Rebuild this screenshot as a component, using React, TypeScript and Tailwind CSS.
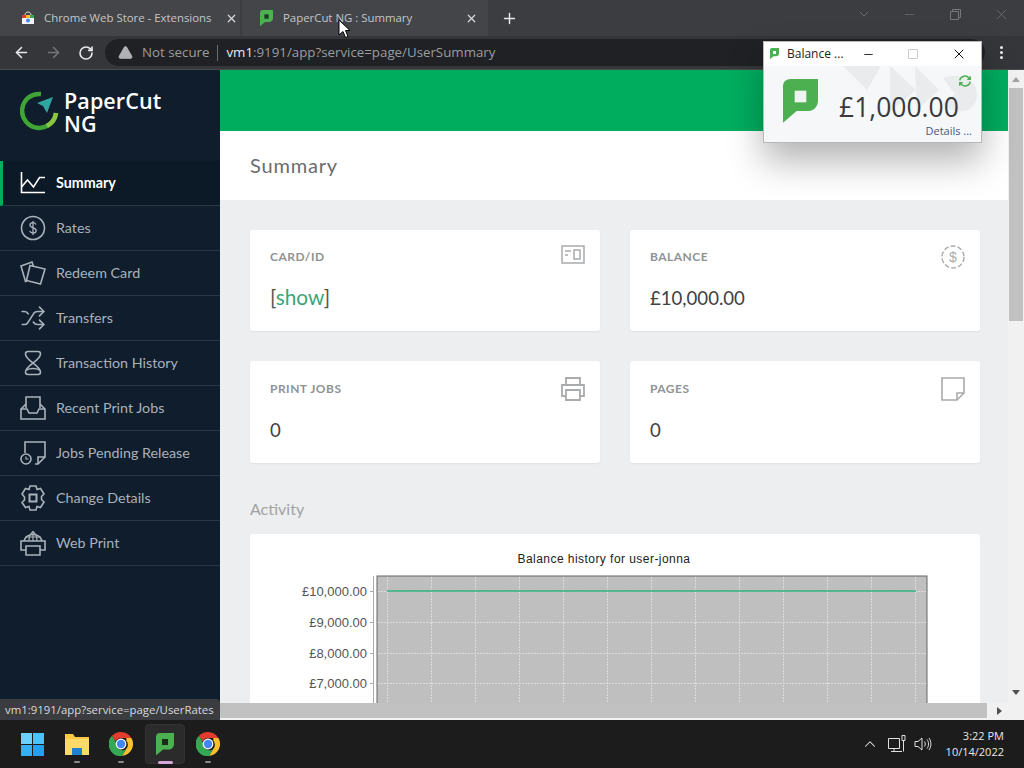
import { ArrowLeft, ArrowRight, ChevronDown, ChevronUp, Minus, Plus, RotateCw, Shuffle, TriangleAlert, X } from 'lucide-react';
import type { ReactNode } from 'react';

function NavIcon({ children }: { children: ReactNode }) {
  return (
    <svg width="26" height="26" viewBox="0 0 26 26" fill="none" stroke="currentColor" strokeWidth="1.6" className="shrink-0">
      {children}
    </svg>
  );
}

const NAV_ITEMS: { label: string; icon: ReactNode }[] = [
  {
    label: 'Summary',
    icon: (
      <NavIcon>
        <path d="M1.500 2v20.500H25" />
        <path d="M1.500 17l6-7 6 7 6-9.500h5.500" />
      </NavIcon>
    ),
  },
  {
    label: 'Rates',
    icon: (
      <NavIcon>
        <circle cx="13" cy="13" r="11.500" />
        <path d="M16 9.500c-.6-1.200-1.700-1.800-3-1.800-1.700 0-3 .9-3 2.500 0 3.300 6.200 1.800 6.200 5.200 0 1.600-1.400 2.600-3.200 2.600-1.500 0-2.700-.7-3.300-2M13 6v14" strokeWidth="1.300" />
      </NavIcon>
    ),
  },
  {
    label: 'Redeem Card',
    icon: (
      <NavIcon>
        <path d="M7 21l-1.500.5L1 6l11-4 1.500 4.500" />
        <path d="M10 5.500l15 3.500-4.500 15-14-3.500z" />
      </NavIcon>
    ),
  },
  {
    label: 'Transfers',
    icon: <Shuffle size={26} strokeWidth={1.5} className="shrink-0" />,
  },
  {
    label: 'Transaction History',
    icon: (
      <NavIcon>
        <path d="M8 1.500h10c1.500 0 2.500 1 2.500 2.500 0 3.500-3.500 6-7.500 9-4-3-7.500-5.500-7.500-9 0-1.500 1-2.500 2.500-2.500z" />
        <path d="M13 13c4 3 7.500 5.500 7.500 9 0 1.500-1 2.500-2.500 2.500H8c-1.500 0-2.500-1-2.500-2.500 0-3.500 3.500-6 7.500-9z" />
        <path d="M6.500 20c3-2 10-2 13 0" />
      </NavIcon>
    ),
  },
  {
    label: 'Recent Print Jobs',
    icon: (
      <NavIcon>
        <path d="M6 13V2h14v11" />
        <path d="M6 9l-5 5v10h24V14l-5-5" />
        <path d="M1 14h6l2 4h8l2-4h6" />
      </NavIcon>
    ),
  },
  {
    label: 'Jobs Pending Release',
    icon: (
      <NavIcon>
        <path d="M5 13V2h20v15l-7 7h-3" />
        <path d="M25 17h-7v7" />
        <circle cx="6" cy="19" r="5" />
        <path d="M6 16.500V19h2.500" strokeWidth="1.200" />
      </NavIcon>
    ),
  },
  {
    label: 'Change Details',
    icon: (
      <NavIcon>
        <path d="M10 1h6l1 3.500 3.500-1 3.500 5.500-2.500 2.500v3l2.500 2.500-3.500 5.500-3.500-1-1 3.500h-6l-1-3.500-3.500 1L2 17.500 4.500 15v-3L2 9l3.500-5.500 3.500 1z" />
        <rect x="9.500" y="9.500" width="7" height="7" strokeWidth="2" />
      </NavIcon>
    ),
  },
  {
    label: 'Web Print',
    icon: (
      <NavIcon>
        <path d="M4 11a9.500 9.500 0 0 1 18 0" />
        <path d="M13 1.500V11M9 11c0-4 1.500-7.500 4-9.500 2.500 2 4 5.500 4 9.500M5 7h16" strokeWidth="1.200" />
        <path d="M6 20H1v-9h24v9h-5" />
        <path d="M6 16h14v9H6z" />
      </NavIcon>
    ),
  },
];

function PaperCutLeaf({ size, inner = '#ffffff' }: { size: number; inner?: string }) {
  return (
    <svg width={size} height={size * 1.25} viewBox="0 0 36 45" className="shrink-0">
      <path d="M8 0h28v22c0 7-5 11-11 11H14L0 45V8c0-5 3-8 8-8z" fill="#4caf50" />
      <rect x="12" y="12" width="12" height="12" fill={inner} />
    </svg>
  );
}

function ChromeLogo() {
  return (
    <svg width="24" height="24" viewBox="0 0 24 24" className="shrink-0">
      <path d="M12 0a12 12 0 0 1 10.400 6H12a6 6 0 0 0-5.500 3.500L3 3.800A12 12 0 0 1 12 0z" fill="#e33b2e" />
      <path d="M22.400 6A12 12 0 0 1 13 24l4.200-7A6 6 0 0 0 17.500 9l-.2-3z" fill="#fbc02d" />
      <path d="M3 3.800l4.500 8A6 6 0 0 0 17.200 17L13 24A12 12 0 0 1 3 3.800z" fill="#35a853" />
      <circle cx="12" cy="12" r="5.400" fill="#fff" />
      <circle cx="12" cy="12" r="4.200" fill="#4285f4" />
    </svg>
  );
}

function StatCard({ label, icon, lower, children }: { label: string; icon: ReactNode; lower?: boolean; children: ReactNode }) {
  return (
    <div className={`bg-white rounded-[3px] shadow-[0_1px_2px_rgba(0,0,0,0.06)] px-5 flex justify-between ${lower ? 'pt-[21px]' : 'pt-[20px]'}`}>
      <div>
        <div className="text-[12px] leading-[14px] font-bold tracking-[0.04em] text-[#909294] h-[14px]">{label}</div>
        <div className="text-[18.6px] leading-[28px] mt-[20px] text-[#3f4144]">{children}</div>
      </div>
      <div className="text-[#a9abad] mt-[-5px] mr-[-5px]">{icon}</div>
    </div>
  );
}

const GRID_X = [387, 431, 475, 519, 563, 607, 651, 695, 739, 783, 827, 871, 915];
const GRID_Y = [591, 622, 653, 683];
const Y_LABELS = ['£10,000.00', '£9,000.00', '£8,000.00', '£7,000.00'];

function BalanceChart() {
  return (
    <svg width="730" height="200" viewBox="250 534 730 200" className="block">
      <text x="604" y="563" textAnchor="middle" fontFamily="Liberation Sans, sans-serif" fontSize="12" letterSpacing="0.45" fill="#222">
        Balance history for user-jonna
      </text>
      <rect x="377" y="576" width="550" height="160" fill="#bfbfbf" stroke="#666" />
      <path d="M373.500 576v160" stroke="#aaa" />
      {GRID_X.map((x) => (
        <path key={x} d={`M${x + 0.5} 577v159`} stroke="#dcdcdc" strokeDasharray="2 1" />
      ))}
      {GRID_Y.map((y, i) => (
        <g key={y}>
          <path d={`M378 ${y + 0.5}h548`} stroke="#dcdcdc" strokeDasharray="2 1" />
          <path d={`M370 ${y + 0.5}h4`} stroke="#aaa" />
          <text x="367" y={y + 5} textAnchor="end" fontFamily="Liberation Sans, sans-serif" fontSize="13" fill="#555">
            {Y_LABELS[i]}
          </text>
        </g>
      ))}
      <path d="M387 591h529" stroke="#2bb07e" strokeWidth="1.500" />
    </svg>
  );
}

function RunningDot() {
  return <div className="absolute bottom-[-7px] left-[9px] w-[6px] h-[2px] rounded-full bg-[#8a8a8a]" />;
}

export default function App() {
  return (
    <div className="relative w-[1024px] h-[768px] overflow-hidden flex flex-col font-['Lato',sans-serif] bg-[#eceef0]">
      {/* chrome tabs */}
      <div className="h-9 shrink-0 bg-[#3b3d40] flex items-stretch font-['Open_Sans',sans-serif] text-[11.4px] text-[#c4c6c8]">
        <div className="w-[240px] bg-[#434548] flex items-center pl-[21px] pr-[2px]">
          <svg width="14" height="14" viewBox="0 0 14 14" className="shrink-0">
            <path d="M1 4h12v9H1z" fill="#f4f4f4" />
            <path d="M1 4h4v3H1z" fill="#e33b2e" />
            <path d="M5 4h4v3H5z" fill="#fbc02d" />
            <path d="M9 4h4v3H9z" fill="#35a853" />
            <circle cx="7" cy="9.500" r="2" fill="#4285f4" />
            <path d="M4 4c0-4 6-4 6 0" fill="none" stroke="#ddd" />
          </svg>
          <span className="ml-[9px] flex-1 whitespace-nowrap">Chrome Web Store - Extensions</span>
          <X size={13} strokeWidth={2.2} className="text-[#dadce0]" />
        </div>
        <div className="w-[246px] bg-[#434548] flex items-center pl-[18px] pr-[10px] ml-[2px]">
          <PaperCutLeaf size={13} inner="#1c3c20" />
          <span className="ml-[10px] flex-1 whitespace-nowrap">PaperCut NG : Summary</span>
          <X size={13} strokeWidth={2.2} className="text-[#dadce0]" />
        </div>
        <div className="flex items-center ml-[13px]">
          <Plus size={17} strokeWidth={2} className="text-[#e8eaed]" />
        </div>
        <div className="flex-1 flex items-center justify-end text-[#75787b] pr-[14px] pb-[8px]">
          <ChevronDown size={16} strokeWidth={1.2} />
          <Minus size={15} strokeWidth={1} className="ml-[30px]" />
          <svg width="11" height="11" viewBox="0 0 11 11" fill="none" stroke="currentColor" className="ml-[33px]">
            <path d="M.5 2.500h8v8h-8zM2.500 2.500v-2h8v8h-2" />
          </svg>
          <X size={17} strokeWidth={1} className="ml-[32px]" />
        </div>
      </div>

      {/* chrome toolbar */}
      <div className="h-[34px] shrink-0 bg-[#35363a] flex items-center pl-[13px] pr-[18px] border-b border-[#4a4b4e]">
        <ArrowLeft size={17} strokeWidth={2.2} className="text-[#e8eaed]" />
        <ArrowRight size={17} strokeWidth={2.2} className="text-[#737578] ml-[15px]" />
        <RotateCw size={16} strokeWidth={2.4} className="text-[#e8eaed] ml-[16px]" />
        <div className="ml-[11px] h-[27px] w-[880px] rounded-full bg-[#202124] flex items-center pl-[13px] font-['Open_Sans',sans-serif] text-[13.3px] text-[#9a9da0]">
          <TriangleAlert size={15} fill="#b0b2b5" stroke="#b0b2b5" className="shrink-0" />
          <span className="ml-[9px] whitespace-nowrap">Not secure</span>
          <span className="w-px h-[16px] bg-[#6a6c6f] mx-[8px]" />
          <span className="whitespace-nowrap">
            <span className="text-[#e8eaed]">vm1</span>:9191/app?service=page/UserSummary
          </span>
        </div>
      </div>

      <div className="h-[650px] shrink-0 flex">
        {/* sidebar */}
        <aside className="w-[220px] shrink-0 bg-[#0f1d2d] text-[#a9b2ba]">
          <div className="h-[91px] flex items-start pl-[20px] pt-[20px]">
            <svg width="40" height="42" viewBox="0 0 40 42" className="shrink-0">
              <path d="M21 4A17 17 0 1 0 36 23" fill="none" stroke="#3fa535" strokeWidth="4.500" />
              <path d="M36 23a17 17 0 0 1-9 13" fill="none" stroke="#8cc63f" strokeWidth="4.500" />
              <path d="M33 7L17 13l6 3 4 7z" fill="#2fa7a0" />
            </svg>
            <div className="ml-[4px] text-white text-[21.5px] leading-[23px] font-['Open_Sans',sans-serif] font-semibold tracking-[0.1px] mt-[-1px]">
              PaperCut
              <br />
              NG
            </div>
          </div>
          {NAV_ITEMS.map((item, index) => (
            <div
              key={item.label}
              className={`h-[45px] flex items-center border-b border-[#2a3846] ${
                index === 0 ? 'bg-[#0c1926] text-white font-bold border-l-[3px] border-l-[#00ad5f] pl-[17px]' : 'pl-[20px]'
              }`}
            >
              {item.icon}
              <span className="ml-[10px] text-[14.3px] whitespace-nowrap">{item.label}</span>
            </div>
          ))}
        </aside>

        <div className="flex-1 min-w-0 flex flex-col">
          <div className="h-[633px] flex">
            {/* page content */}
            <main className="w-[788px] overflow-hidden">
              <div className="h-[61px] bg-[#00ad5f]" />
              <div className="h-[69px] bg-white flex items-center pl-[30px] pb-[2px] text-[20px] tracking-[0.04em] text-[#6a6c6e]">Summary</div>
              <div className="pt-[30px] pl-[30px]">
                <div className="w-[730px] grid grid-cols-2 grid-rows-[101px_102px] gap-[30px]">
                  <StatCard
                    label="CARD/ID"
                    icon={
                      <svg width="24" height="20" viewBox="0 0 24 20" fill="none" stroke="currentColor" strokeWidth="1.500">
                        <path d="M1 1h22v17H1zM4 6h6M4 10h3M13 5h6v9h-6z" />
                      </svg>
                    }
                  >
                    <span className="text-[20.8px] leading-[20px]">
                      <span className="text-[#555]">[</span>
                      <span className="text-[#3aa578]">show</span>
                      <span className="text-[#555]">]</span>
                    </span>
                  </StatCard>
                  <StatCard
                    label="BALANCE"
                    icon={
                      <svg width="24" height="24" viewBox="0 0 24 24" fill="none" stroke="currentColor" strokeWidth="1.400">
                        <circle cx="12" cy="12" r="11" strokeDasharray="5 2" />
                        <text x="12" y="17" textAnchor="middle" fontSize="14" fontFamily="Liberation Sans, sans-serif" fill="currentColor" stroke="none">$</text>
                      </svg>
                    }
                  >
                    £10,000.00
                  </StatCard>
                  <StatCard
                    lower
                    label="PRINT JOBS"
                    icon={
                      <svg width="24" height="24" viewBox="0 0 24 24" fill="none" stroke="currentColor" strokeWidth="1.800">
                        <path d="M5 8V1h14v7M5 19H1V8h22v11h-4M5 13h14v10H5z" />
                      </svg>
                    }
                  >
                    0
                  </StatCard>
                  <StatCard
                    lower
                    label="PAGES"
                    icon={
                      <svg width="24" height="24" viewBox="0 0 24 24" fill="none" stroke="currentColor" strokeWidth="1.600">
                        <path d="M1 1h22v15l-7 7H1zM23 16h-7v7" />
                      </svg>
                    }
                  >
                    0
                  </StatCard>
                </div>
                <div className="mt-[36px] text-[16px] leading-[20px] text-[#a1a3a5]">Activity</div>
                <div className="mt-[15px] w-[730px] bg-white rounded-[3px]">
                  <BalanceChart />
                </div>
              </div>
            </main>
            {/* vertical scrollbar */}
            <div className="w-4 bg-[#f1f1f1] flex flex-col items-center">
              <div className="h-[18px] flex items-center justify-center">
                <div className="w-0 h-0 border-x-[4px] border-x-transparent border-b-[5px] border-b-[#a3a3a3]" />
              </div>
              <div className="w-[14px] h-[233px] bg-[#c1c1c1]" />
              <div className="flex-1" />
              <div className="h-[15px] flex items-center justify-center mb-[3px]">
                <div className="w-0 h-0 border-x-[4px] border-x-transparent border-t-[5px] border-t-[#505050]" />
              </div>
            </div>
          </div>
          {/* horizontal scrollbar */}
          <div className="h-[17px] flex bg-[#f1f1f1]">
            <div className="w-[767px] h-[15px] bg-[#c1c1c1]" />
            <div className="w-[21px] h-[15px] flex items-center justify-end pr-[6px]">
              <div className="w-0 h-0 border-y-[4px] border-y-transparent border-l-[5px] border-l-[#505050]" />
            </div>
          </div>
        </div>
      </div>

      {/* windows taskbar */}
      <div className="h-12 shrink-0 bg-[#1c1c1c] flex items-center text-white">
        <div className="ml-[21px] grid grid-cols-2 gap-[1px] w-[23px] h-[23px]">
          <div className="bg-[#6ad2fb]" />
          <div className="bg-[#4cc2f8]" />
          <div className="bg-[#34b0f3]" />
          <div className="bg-[#259ff0]" />
        </div>
        <div className="ml-[21px] relative w-[24px] h-[24px]">
          <svg width="24" height="24" viewBox="0 0 24 24">
            <path d="M0 2h8l2 3h14v18H0z" fill="#f7c945" />
            <path d="M0 7h24v16H0z" fill="#fbd96b" />
            <path d="M7 16h10v7H7z" fill="#1f7fd0" />
          </svg>
          <RunningDot />
        </div>
        <div className="ml-[20px] relative">
          <ChromeLogo />
          <RunningDot />
        </div>
        <div className="ml-[12px] w-10 h-10 rounded-[4px] bg-[#2b2b2b] border border-[#333] flex items-center justify-center relative">
          <PaperCutLeaf size={18} inner="#1c2a1c" />
          <div className="absolute bottom-[-1px] left-[12px] w-[15px] h-[3px] rounded-full bg-[#d9a6dc]" />
        </div>
        <div className="ml-[11px] relative">
          <ChromeLogo />
          <RunningDot />
        </div>
        <div className="flex-1" />
        <ChevronUp size={18} strokeWidth={1.4} className="text-[#e8e8e8] mr-[9px]" />
        <svg width="18" height="18" viewBox="0 0 18 18" fill="none" stroke="#e0e0e0" className="mr-[8px]">
          <path d="M.5 3.500h11v10H.5zM6 13.500v3M3 16.500h11M14 .5h3v5h-3zM15.500 5.500v11" />
        </svg>
        <svg width="18" height="18" viewBox="0 0 18 18" fill="none" stroke="#e0e0e0" className="mr-[12px]">
          <path d="M1 6.500h3l4-3.500v12l-4-3.500H1zM10.500 6.500c1 1.500 1 3.500 0 5M13 4.500c2 2.500 2 6.500 0 9M15 3c2.500 3.500 2.500 8.500 0 12" />
        </svg>
        <div className="w-[60px] text-right mr-[20px] font-['Open_Sans',sans-serif] text-[11px] leading-[16px] text-[#e8e8e8]">
          <div>3:22 PM</div>
          <div>10/14/2022</div>
        </div>
      </div>

      {/* link status bubble */}
      <div className="absolute left-0 top-[699px] h-[21px] w-[220px] rounded-tr-[4px] bg-[#3a3c3f] text-[#d8dadc] font-['Open_Sans',sans-serif] text-[11.4px] leading-[21px] pl-[5px] whitespace-nowrap">
        vm1:9191/app?service=page/UserRates
      </div>

      {/* balance window */}
      <div className="absolute left-[763px] top-[41px] w-[219px] h-[102px] bg-[#f5f7f8] border border-[#b9b9b9] shadow-[0_18px_36px_rgba(0,0,0,0.3)] font-['Open_Sans',sans-serif] flex flex-col">
        <div className="h-[24px] bg-white flex items-center pl-[6px] text-[12px] text-[#222]">
          <PaperCutLeaf size={9} />
          <span className="ml-[8px] w-[62px] whitespace-nowrap">Balance ...</span>
          <Minus size={13} strokeWidth={1.5} className="ml-[13px] text-black" />
          <div className="ml-[33px] w-[10px] h-[10px] rounded-[1px] border border-[#ccc]" />
          <X size={16} strokeWidth={1.4} className="ml-[33px] text-black" />
        </div>
        <div className="relative flex-1 overflow-hidden">
          <svg width="136" height="50" viewBox="0 0 136 50" className="absolute left-[79px] top-0" fill="#e9ebed">
            <path d="M0 0h38l-14 24zM47 0l26 24-26 22zM72 0l24 24-22 20zM100 12c14-6 34 0 34 16s-14 20-26 16l-8-6 12-10z" />
          </svg>
          <div className="relative flex pl-[19px] pt-[13px]">
            <PaperCutLeaf size={35} inner="#f0f4f0" />
            <div className="relative ml-[21px] pt-[13px] text-[26.5px] leading-[30px] text-[#3a3a3e] whitespace-nowrap">£1,000.00</div>
          </div>
          <svg width="14" height="14" viewBox="0 0 24 24" fill="none" stroke="#4caf50" strokeWidth="2.500" className="absolute right-[9px] top-[8px]">
            <path d="M3 11a9 9 0 0 1 16-4l2 2M21 4v5h-5M21 13a9 9 0 0 1-16 4l-2-2M3 20v-5h5" />
          </svg>
          <div className="absolute right-[9px] bottom-[5px] text-[11px] leading-[13px] text-[#475a85]">Details ...</div>
        </div>
      </div>

      {/* three dots menu, beside the balance window */}
      <div className="absolute left-[1000px] top-[46px] flex flex-col gap-[2px]">
        <div className="w-[3px] h-[3px] rounded-full bg-[#e8eaed]" />
        <div className="w-[3px] h-[3px] rounded-full bg-[#e8eaed]" />
        <div className="w-[3px] h-[3px] rounded-full bg-[#e8eaed]" />
      </div>

      {/* mouse pointer */}
      <svg width="14" height="20" viewBox="0 0 14 20" className="absolute left-[338px] top-[19px]">
        <path d="M1 1v15l4-3.500 2.500 6 2.500-1-2.500-6H12z" fill="#fff" stroke="#000" />
      </svg>
    </div>
  );
}
